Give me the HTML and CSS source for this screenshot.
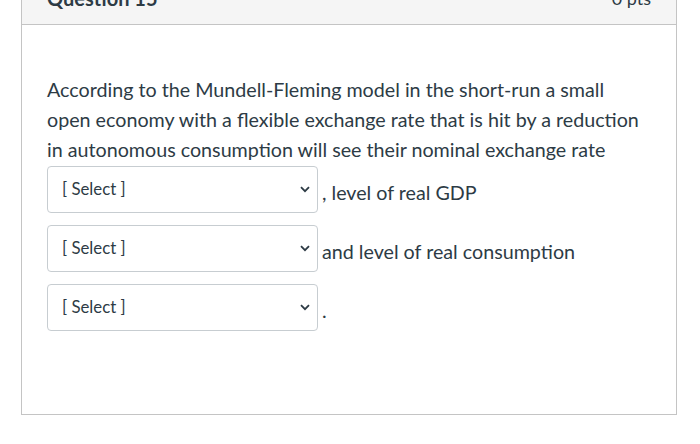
FILE: index.html
```html
<!DOCTYPE html>
<html lang="en">
<head>
<meta charset="utf-8">
<title>Question 15</title>
<link rel="stylesheet" href="styles.css">
</head>
<body>
<div class="page">
  <div class="card">
    <div class="card-header">
      <span class="q-title">Question 15</span>
      <span class="q-points">0 pts</span>
    </div>
    <div class="card-body">
      <p class="q-text">According to the Mundell-Fleming model in the short-run a small open economy with a flexible exchange rate that is hit by a reduction in autonomous consumption will see their nominal exchange rate</p>
      <div class="answers">
        <div class="answer-row">
          <div class="select-box"><span>[ Select ]</span><svg class="chev" width="10" height="7" viewBox="0 0 10 7"><path d="M1 1.2 L5 5.2 L9 1.2" fill="none" stroke="#2d3b45" stroke-width="1.8"/></svg></div>
          <span class="after">, level of real GDP</span>
        </div>
        <div class="answer-row">
          <div class="select-box"><span>[ Select ]</span><svg class="chev" width="10" height="7" viewBox="0 0 10 7"><path d="M1 1.2 L5 5.2 L9 1.2" fill="none" stroke="#2d3b45" stroke-width="1.8"/></svg></div>
          <span class="after">and level of real consumption</span>
        </div>
        <div class="answer-row">
          <div class="select-box"><span>[ Select ]</span><svg class="chev" width="10" height="7" viewBox="0 0 10 7"><path d="M1 1.2 L5 5.2 L9 1.2" fill="none" stroke="#2d3b45" stroke-width="1.8"/></svg></div>
          <span class="after">.</span>
        </div>
      </div>
    </div>
  </div>
</div>
</body>
</html>
```

FILE: styles.css
```css
html, body {
  margin: 0;
  padding: 0;
  background: #ffffff;
}
body {
  font-family: Lato, "Open Sans", sans-serif;
  color: #2d3b45;
}
.page {
  padding: 0 23px 0 21px;
}
.card {
  margin-top: -40px;
  border: 1px solid #c4c4c4;
  background: #ffffff;
}
.card-header {
  height: 64px;
  box-sizing: border-box;
  background: #f5f5f5;
  border-bottom: 1px solid #c4c4c4;
  display: flex;
  justify-content: space-between;
  padding: 25px 25px 0 25px;
  font-size: 20px;
  line-height: 24px;
  font-weight: 700;
}
.q-points {
  font-weight: 400;
  font-size: 18px;
}
.card-body {
  padding: 50px 25px 83px 25px;
}
.q-text {
  margin: 0;
  font-size: 19.7px;
  line-height: 30px;
}
.answers {
  display: flex;
  flex-direction: column;
  gap: 12px;
  margin-top: 1px;
}
.answer-row {
  display: flex;
  align-items: center;
  gap: 4px;
}
.select-box {
  width: 271px;
  height: 47px;
  box-sizing: border-box;
  border: 1px solid #c7cdd1;
  border-radius: 4px;
  display: flex;
  align-items: center;
  justify-content: space-between;
  padding: 0 7px 3px 14px;
  font-size: 16.8px;
}
.chev {
  display: block;
  margin-top: 2px;
}
.after {
  font-size: 19.7px;
  line-height: 30px;
  padding-top: 6px;
}
```
